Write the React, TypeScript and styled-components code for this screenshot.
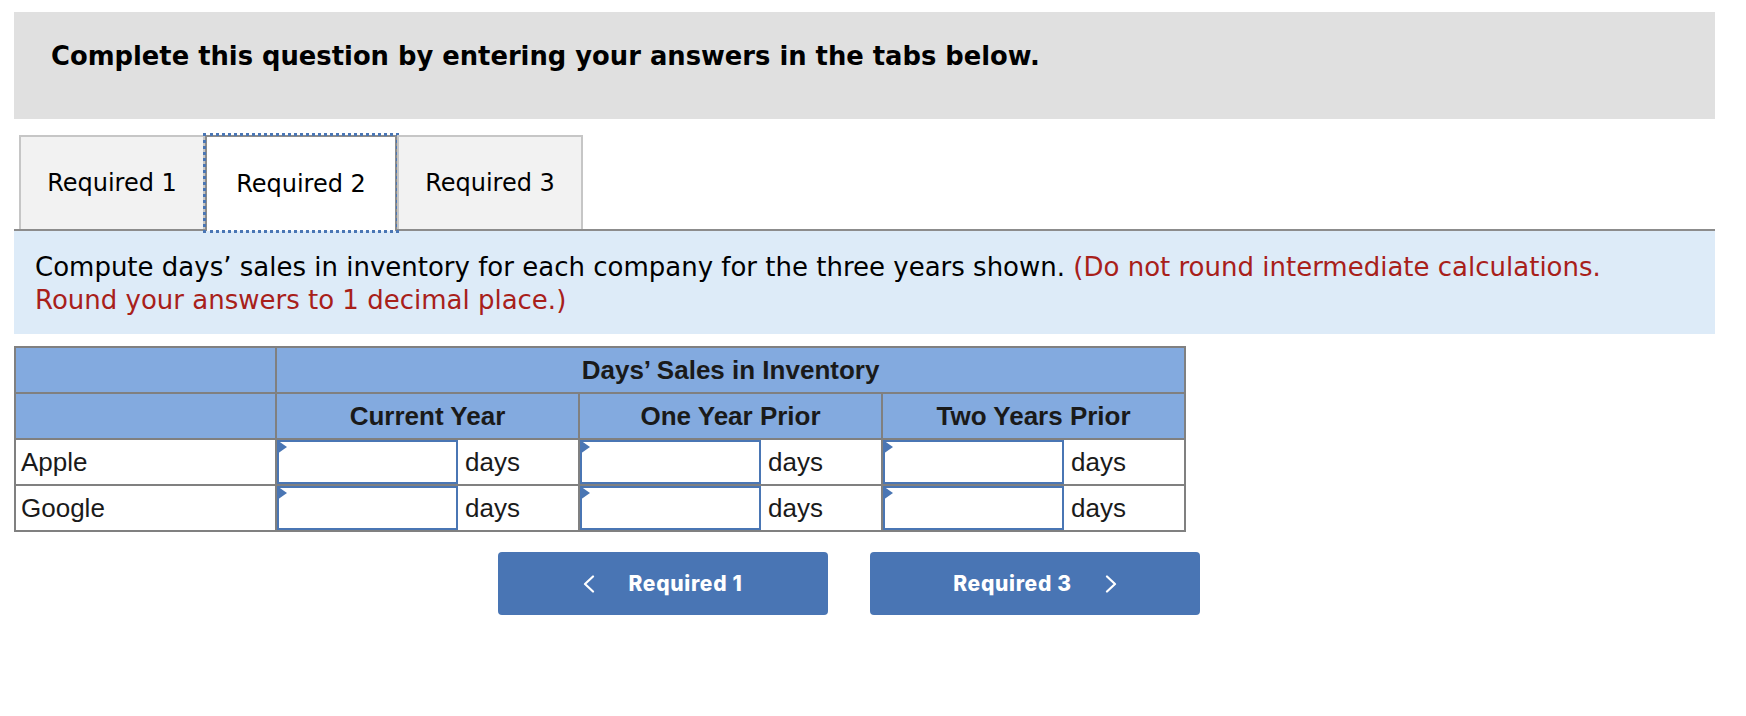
import { Fragment, FunctionComponent } from 'react';
import styled, { createGlobalStyle } from 'styled-components';

const GlobalStyle = createGlobalStyle`
  body {
    margin: 0;
    background: #ffffff;
    font-family: "DejaVu Sans", Verdana, sans-serif;
  }
`;

const Page = styled.div`
  padding: 12px 31px 0 14px;
`;

const Banner = styled.div`
  background-color: #e0e0e0;
  height: 107px;
  display: flex;
  align-items: center;
  padding: 0 0 19px 37px;
  box-sizing: border-box;

  h1 {
    margin: 0;
    font-size: 25.8px;
    font-weight: bold;
    color: #000;
  }
`;

const TabBar = styled.div`
  display: flex;
  margin-top: 16px;
  padding-left: 5px;
  border-bottom: 2px solid #8c8c8c;
  height: 94px;
`;

const Tab = styled.div<{ $active?: boolean; $w: number }>`
  width: ${(p) => p.$w}px;
  box-sizing: border-box;
  display: flex;
  align-items: center;
  justify-content: center;
  font-size: 24px;
  color: #000;
  background-color: ${(p) => (p.$active ? '#ffffff' : '#f2f2f2')};
  border: 2px solid ${(p) => (p.$active ? '#8c8c8c' : '#c6c6c6')};
  border-bottom: none;
  outline: ${(p) => (p.$active ? '3px dotted #4a76b4' : 'none')};
  outline-offset: -1px;
  margin-bottom: ${(p) => (p.$active ? '-2px' : '0')};
`;

const Instructions = styled.div`
  background-color: #ddebf8;
  height: 103px;
  box-sizing: border-box;
  padding: 20px 21px 0 21px;
  font-size: 26px;
  line-height: 33px;
  color: #000;
`;

const Note = styled.span`
  color: #a8201a;
`;

const Table = styled.table`
  margin-top: 12px;
  border-collapse: collapse;
  table-layout: fixed;
  width: 1171px;
  font-family: "Liberation Sans", Arial, sans-serif;
  border: 2px solid #808080;
`;

const HeadCell = styled.th`
  background-color: #83aadf;
  border: 2px solid #808080;
  height: 44px;
  padding: 0;
  font-size: 26px;
  font-weight: bold;
  color: #1a1a1a;
  text-align: center;
`;

const NameCell = styled.td`
  border: 2px solid #808080;
  height: 44px;
  padding: 0 0 0 5px;
  font-size: 26px;
  color: #1a1a1a;
`;

const InputCell = styled.td`
  border: 2px solid #808080;
  border-right: none;
  padding: 0;
`;

const UnitCell = styled.td`
  border: 2px solid #808080;
  border-left: none;
  padding: 0 0 0 7px;
  font-size: 26px;
  color: #1a1a1a;
`;

const AnswerBox = styled.div`
  position: relative;
  height: 44px;
  box-sizing: border-box;
  border: 2px solid #4a76b4;
  background: #fff;

  &::before {
    content: '';
    position: absolute;
    left: -2px;
    top: -2px;
    border-top: 7px solid transparent;
    border-bottom: 7px solid transparent;
    border-left: 10px solid #4a76b4;
  }
`;

const NavRow = styled.div`
  display: flex;
  gap: 42px;
  margin: 20px 0 0 484px;
`;

const NavButton = styled.button`
  width: 330px;
  height: 63px;
  border: none;
  border-radius: 4px;
  background-color: #4975b4;
  color: #fff;
  font-family: Inter, Roboto, sans-serif;
  font-weight: 800;
  font-size: 21px;
  letter-spacing: 0.7px;
  display: flex;
  align-items: center;
  justify-content: center;
  gap: 33px;
  padding: 0;
  cursor: pointer;
`;

const Chevron: FunctionComponent<{ dir: 'left' | 'right' }> = ({ dir }) => (
  <svg width="12" height="18" viewBox="0 0 12 18" fill="none">
    <path
      d={dir === 'left' ? 'M10 1.5 L2 9 L10 16.5' : 'M2 1.5 L10 9 L2 16.5'}
      stroke="#fff"
      strokeWidth="2.2"
      strokeLinecap="round"
      strokeLinejoin="round"
    />
  </svg>
);

const companies = ['Apple', 'Google'];
const years = ['Current Year', 'One Year Prior', 'Two Years Prior'];

const App: FunctionComponent = (): JSX.Element => {
  return (
    <Page>
      <GlobalStyle />
      <Banner>
        <h1>Complete this question by entering your answers in the tabs below.</h1>
      </Banner>
      <TabBar>
        <Tab $w={186}>Required 1</Tab>
        <Tab $w={192} $active>
          Required 2
        </Tab>
        <Tab $w={186}>Required 3</Tab>
      </TabBar>
      <Instructions>
        Compute days’ sales in inventory for each company for the three years shown.{' '}
        <Note>
          (Do not round intermediate calculations.
          <br />
          Round your answers to 1 decimal place.)
        </Note>
      </Instructions>
      <Table>
        <colgroup>
          <col style={{ width: 261 }} />
          {years.map((y) => (
            <Fragment key={y}>
              <col style={{ width: 182 }} />
              <col style={{ width: 121 }} />
            </Fragment>
          ))}
        </colgroup>
        <thead>
          <tr>
            <HeadCell />
            <HeadCell colSpan={6}>Days’ Sales in Inventory</HeadCell>
          </tr>
          <tr>
            <HeadCell />
            {years.map((y) => (
              <HeadCell key={y} colSpan={2}>
                {y}
              </HeadCell>
            ))}
          </tr>
        </thead>
        <tbody>
          {companies.map((c) => (
            <tr key={c}>
              <NameCell>{c}</NameCell>
              {years.map((y) => (
                <Fragment key={y}>
                  <InputCell>
                    <AnswerBox />
                  </InputCell>
                  <UnitCell>days</UnitCell>
                </Fragment>
              ))}
            </tr>
          ))}
        </tbody>
      </Table>
      <NavRow>
        <NavButton>
          <Chevron dir="left" />
          Required 1
        </NavButton>
        <NavButton>
          Required 3
          <Chevron dir="right" />
        </NavButton>
      </NavRow>
    </Page>
  );
};

export default App;
